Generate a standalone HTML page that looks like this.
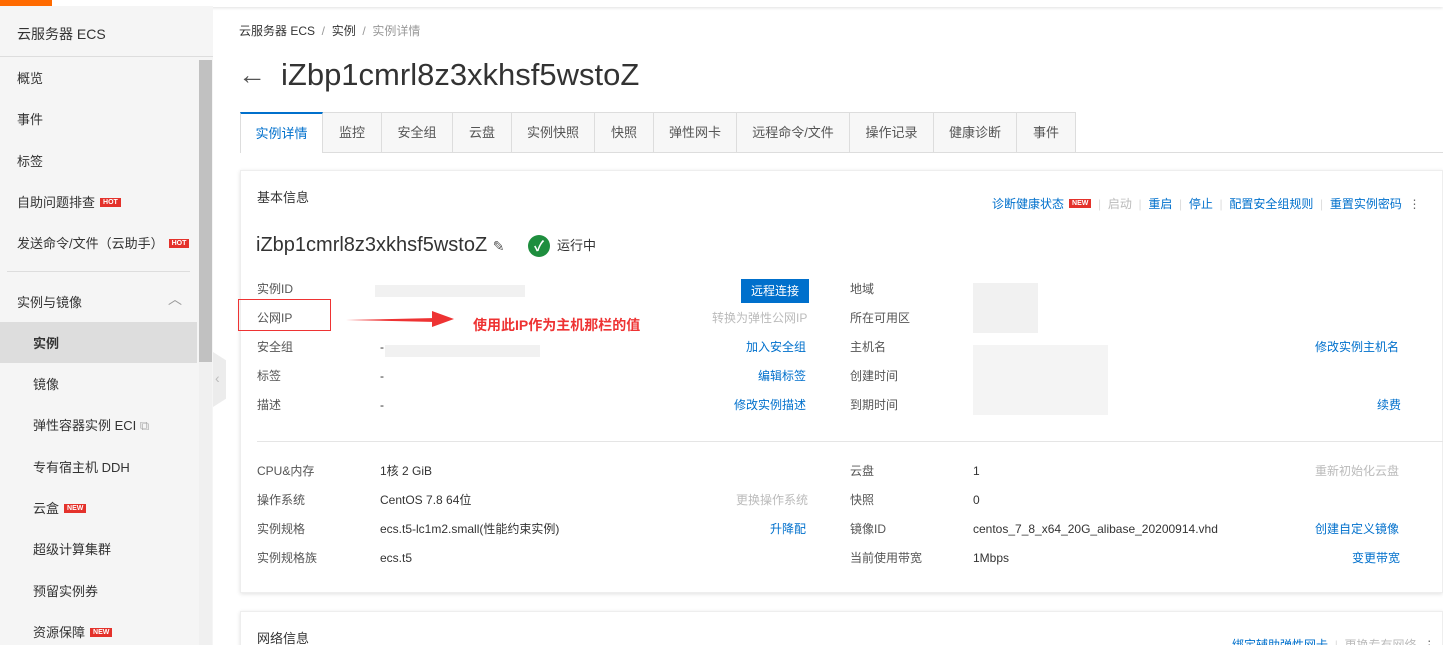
<!DOCTYPE html>
<html style="height:645px;overflow:hidden"><head><meta charset="utf-8"><style>
*{margin:0;padding:0;box-sizing:border-box}
body{width:1443px;height:645px;overflow:hidden;background:#fff;font-family:"Liberation Sans","Noto Sans CJK SC",sans-serif;font-size:12px;color:#333;position:relative}
.a{position:absolute;white-space:nowrap;line-height:17px}
.side{position:absolute;left:0;top:6px;width:213px;height:639px;background:#f5f5f5}
.nav{position:absolute;left:17px;font-size:13px;color:#333}
.sub{left:33px}
.hot{display:inline-block;background:#e4322b;color:#fff;font-size:7px;font-weight:bold;padding:0 3px;line-height:9px;margin-left:5px;vertical-align:3px}
.lbl{color:#555}
.lk{color:#0070cc}
.dis{color:#bbb}
.tab{position:absolute;top:112px;height:41px;border:1px solid #ddd;border-left:none;background:#f7f7f7;line-height:40px;text-align:center;font-size:13px;color:#555}
.card{position:absolute;left:240px;right:0;background:#fff;border:1px solid #eee;box-shadow:0 1px 4px rgba(0,0,0,.12)}
.blur{position:absolute;background:#e3e3e3;opacity:.5}
</style></head><body>
<div class="a" style="left:0;top:0;width:1443px;height:7px;background:#fff;box-shadow:0 1px 3px rgba(0,0,0,.12)"></div>
<div class="a" style="left:0;top:0;width:52px;height:6px;background:#ff6a00"></div>
<div class="side">
 <div class="nav" style="top:18px;font-size:14px">云服务器 ECS</div>
 <div class="a" style="left:0;top:50px;width:213px;border-top:1px solid #ddd"></div>
 <div class="nav" style="top:62px">概览</div>
 <div class="nav" style="top:103px">事件</div>
 <div class="nav" style="top:145px">标签</div>
 <div class="nav" style="top:186px">自助问题排查<span class="hot">HOT</span></div>
 <div class="nav" style="top:227px">发送命令/文件（云助手）<span class="hot">HOT</span></div>
 <div class="a" style="left:7px;top:265px;width:183px;border-top:1px solid #ddd"></div>
 <div class="nav" style="top:286px">实例与镜像</div>
 <div class="a" style="left:168px;top:285px;color:#999;font-size:14px">︿</div>
 <div class="a" style="left:0;top:255px;top:316px;width:197px;height:41px;background:#ddd"></div>
 <div class="nav sub" style="top:327px;font-weight:bold">实例</div>
 <div class="nav sub" style="top:368px">镜像</div>
 <div class="nav sub" style="top:409px">弹性容器实例 ECI <span style="color:#aaa">⧉</span></div>
 <div class="nav sub" style="top:451px">专有宿主机 DDH</div>
 <div class="nav sub" style="top:492px">云盒<span class="hot">NEW</span></div>
 <div class="nav sub" style="top:533px">超级计算集群</div>
 <div class="nav sub" style="top:575px">预留实例券</div>
 <div class="nav sub" style="top:616px">资源保障<span class="hot">NEW</span></div>
 <div class="a" style="left:199px;top:54px;width:13px;height:589px;background:#f0f0f0"></div>
 <div class="a" style="left:199px;top:54px;width:13px;height:302px;background:#c1c1c1"></div>
</div>
<div class="a" style="left:213px;top:352px;width:13px;height:55px;background:#ececec;clip-path:polygon(0 0,100% 15%,100% 85%,0 100%)"></div>
<div class="a" style="left:215px;top:370px;color:#bbb;font-size:14px">‹</div>

<div class="a" style="left:239px;top:23px;color:#333">云服务器 ECS <span style="color:#999">&nbsp;/&nbsp;</span> 实例 <span style="color:#999">&nbsp;/&nbsp; 实例详情</span></div>
<div class="a" style="left:238px;top:57px;font-size:28px;line-height:36px;color:#555">←</div>
<div class="a" style="left:281px;top:56px;font-size:31px;line-height:38px;color:#333">iZbp1cmrl8z3xkhsf5wstoZ</div>

<div class="tab" style="left:240px;width:83px;background:#fff;border-left:1px solid #ddd;border-top:2px solid #0070cc;border-bottom:none;color:#0070cc">实例详情</div>
<div class="tab" style="left:323px;width:59px">监控</div>
<div class="tab" style="left:382px;width:71px">安全组</div>
<div class="tab" style="left:453px;width:59px">云盘</div>
<div class="tab" style="left:512px;width:83px">实例快照</div>
<div class="tab" style="left:595px;width:59px">快照</div>
<div class="tab" style="left:654px;width:83px">弹性网卡</div>
<div class="tab" style="left:737px;width:113px">远程命令/文件</div>
<div class="tab" style="left:850px;width:84px">操作记录</div>
<div class="tab" style="left:934px;width:83px">健康诊断</div>
<div class="tab" style="left:1017px;width:59px">事件</div>
<div class="a" style="left:1076px;top:152px;width:367px;border-top:1px solid #ddd"></div>

<div class="card" style="top:170px;height:423px"></div>
<div class="card" style="top:611px;height:60px"></div>
<div class="a" style="left:257px;top:189px;font-size:13px">基本信息</div>
<div class="a" style="left:992px;top:196px"><span class="lk">诊断健康状态</span><span class="hot">NEW</span> <span style="color:#ddd">&nbsp;|&nbsp;</span> <span class="dis">启动</span> <span style="color:#ddd">&nbsp;|&nbsp;</span> <span class="lk">重启</span> <span style="color:#ddd">&nbsp;|&nbsp;</span> <span class="lk">停止</span> <span style="color:#ddd">&nbsp;|&nbsp;</span> <span class="lk">配置安全组规则</span> <span style="color:#ddd">&nbsp;|&nbsp;</span> <span class="lk">重置实例密码</span> <span style="color:#666">&nbsp;⋮</span></div>
<div class="a" style="left:256px;top:233px;font-size:20px;line-height:24px;color:#333">iZbp1cmrl8z3xkhsf5wstoZ <span style="font-size:14px;color:#555">✎</span></div>
<div class="a" style="left:528px;top:235px;width:22px;height:22px;border-radius:50%;background:#1e8e3e;color:#fff;text-align:center;line-height:22px;font-size:14px;font-weight:bold">✓</div>
<div class="a" style="left:557px;top:237px;font-size:13px">运行中</div>

<div class="a lbl" style="left:257px;top:281px">实例ID</div>
<div class="blur" style="left:375px;top:285px;width:150px;height:12px"></div>
<div class="a" style="left:741px;top:279px;width:68px;height:24px;background:#0070cc;color:#fff;line-height:24px;text-align:center">远程连接</div>
<div class="a lbl" style="left:257px;top:310px">公网IP</div>
<div class="a" style="left:238px;top:299px;width:93px;height:32px;border:1px solid #e33"></div>
<div class="a" style="left:346px;top:318px;width:90px;height:4px;background:#e33;clip-path:polygon(0 50%,100% 0,100% 100%)"></div>
<div class="a" style="left:432px;top:311px;width:22px;height:16px;background:#e33;clip-path:polygon(0 0,100% 50%,0 100%)"></div>
<div class="a" style="left:473px;top:317px;color:#e33;font-size:14px;font-weight:bold">使用此IP作为主机那栏的值</div>
<div class="a dis" style="left:712px;top:310px">转换为弹性公网IP</div>
<div class="a lbl" style="left:257px;top:339px">安全组</div>
<div class="a" style="left:380px;top:339px">-</div>
<div class="blur" style="left:385px;top:345px;width:155px;height:12px"></div>
<div class="a lk" style="left:746px;top:339px">加入安全组</div>
<div class="a lbl" style="left:257px;top:368px">标签</div><div class="a" style="left:380px;top:368px">-</div>
<div class="a lk" style="left:758px;top:368px">编辑标签</div>
<div class="a lbl" style="left:257px;top:397px">描述</div><div class="a" style="left:380px;top:397px">-</div>
<div class="a lk" style="left:734px;top:397px">修改实例描述</div>

<div class="a lbl" style="left:850px;top:281px">地域</div>
<div class="a lbl" style="left:850px;top:310px">所在可用区</div>
<div class="a lbl" style="left:850px;top:339px">主机名</div>
<div class="a lbl" style="left:850px;top:368px">创建时间</div>
<div class="a lbl" style="left:850px;top:397px">到期时间</div>
<div class="blur" style="left:973px;top:283px;width:65px;height:50px"></div>
<div class="blur" style="left:973px;top:345px;width:135px;height:70px;opacity:.4"></div>
<div class="a lk" style="left:1315px;top:339px">修改实例主机名</div>
<div class="a lk" style="left:1377px;top:397px">续费</div>

<div class="a" style="left:257px;top:441px;width:1186px;border-top:1px solid #e5e5e5"></div>
<div class="a lbl" style="left:257px;top:463px">CPU&amp;内存</div><div class="a" style="left:380px;top:463px">1核 2 GiB</div>
<div class="a lbl" style="left:257px;top:492px">操作系统</div><div class="a" style="left:380px;top:492px">CentOS 7.8 64位</div>
<div class="a dis" style="left:736px;top:492px">更换操作系统</div>
<div class="a lbl" style="left:257px;top:521px">实例规格</div><div class="a" style="left:380px;top:521px">ecs.t5-lc1m2.small(性能约束实例)</div>
<div class="a lk" style="left:770px;top:521px">升降配</div>
<div class="a lbl" style="left:257px;top:550px">实例规格族</div><div class="a" style="left:380px;top:550px">ecs.t5</div>

<div class="a lbl" style="left:850px;top:463px">云盘</div><div class="a" style="left:973px;top:463px">1</div>
<div class="a dis" style="left:1315px;top:463px">重新初始化云盘</div>
<div class="a lbl" style="left:850px;top:492px">快照</div><div class="a" style="left:973px;top:492px">0</div>
<div class="a lbl" style="left:850px;top:521px">镜像ID</div><div class="a" style="left:973px;top:521px">centos_7_8_x64_20G_alibase_20200914.vhd</div>
<div class="a lk" style="left:1315px;top:521px">创建自定义镜像</div>
<div class="a lbl" style="left:850px;top:550px">当前使用带宽</div><div class="a" style="left:973px;top:550px">1Mbps</div>
<div class="a lk" style="left:1352px;top:550px">变更带宽</div>

<div class="a" style="left:257px;top:630px;font-size:13px">网络信息</div>
<div class="a" style="left:1232px;top:637px"><span class="lk">绑定辅助弹性网卡</span> <span style="color:#ddd">&nbsp;|&nbsp;</span> <span class="dis">更换专有网络</span> <span style="color:#666">&nbsp;⋮</span></div>
</body></html>
